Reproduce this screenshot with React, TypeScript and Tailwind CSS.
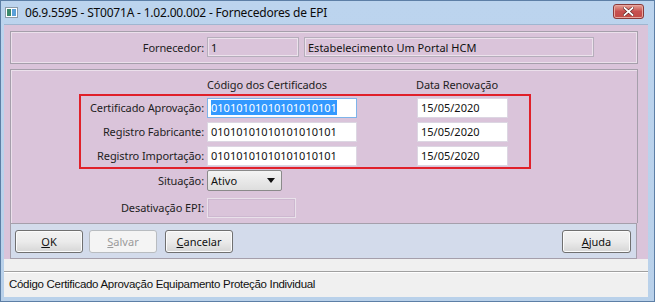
import React from "react";

const label = "text-[11px] text-[#1e1e1e] leading-none whitespace-nowrap tracking-[-0.1px]";
const ff = { fontFamily: '"Noto Sans", "Open Sans", sans-serif' } as React.CSSProperties;

function Field({ w, children, selected = false, disabled = false }: { w: string; children?: React.ReactNode; selected?: boolean; disabled?: boolean }) {
  return (
    <div
      className={`${w} h-[20px] flex items-center pl-[3px] text-[11px] leading-none text-[#111] border ${
        selected ? "border-[#7eb4ea] bg-white" : disabled ? "border-[#b5aebb] bg-[#dac4da] shadow-[inset_0_0_0_1px_#ece2ec]" : "border-[#dcd6e2] bg-white"
      }`}
    >
      {selected ? <span className="bg-[#3399ff] text-white h-[15px] flex items-center">{children}</span> : children}
    </div>
  );
}

function Btn({ children, w = "w-[68px]", disabled = false }: { children: React.ReactNode; w?: string; disabled?: boolean }) {
  return (
    <div
      className={`${w} h-[23px] rounded-[3px] border flex items-center justify-center text-[11px] leading-none ${
        disabled
          ? "border-[#b8bcc0] bg-[#f4f4f4] text-[#9a9a9a]"
          : "border-[#707070] bg-gradient-to-b from-[#f2f2f2] via-[#ebebeb] to-[#d6d6d6] text-[#111] shadow-[inset_0_0_0_1px_#fbfbfb]"
      }`}
    >
      {children}
    </div>
  );
}

export default function App() {
  return (
    <div className="w-[655px] h-[302px] overflow-hidden bg-white" style={ff}>
      <div className="w-[655px] h-[302px] flex flex-col bg-gradient-to-b from-[#bcd4ee] to-[#b9d1ea] border border-[#5d7fa6]">
        {/* title bar */}
        <div className="h-[23px] flex items-center shrink-0">
          <div className="ml-[4px] w-[13px] h-[11px] border border-[#8a9aa8] bg-white flex items-center p-[1px] gap-[1px]">
            <div className="w-[5px] h-[7px] bg-[#3b8a6c]" />
            <div className="w-[4px] h-[7px] bg-[#5aa0d8]" />
          </div>
          <div className="ml-[7px] text-[12px] text-[#0b0b0b] whitespace-nowrap tracking-[-0.2px]">
            06.9.5595 - ST0071A - 1.02.00.002 - Fornecedores de EPI
          </div>
          <div className="ml-auto mr-[10px] mt-[-3px] w-[31px] h-[15px] rounded-[3px] border border-[#8a3a3a] bg-gradient-to-b from-[#e4a296] via-[#c75050] to-[#c24a45] flex items-center justify-center shadow-[inset_0_0_0_1px_#e8a7a0]">
            <svg width="11" height="9" viewBox="0 0 11 9">
              <path d="M1.5 1 L9.5 8 M9.5 1 L1.5 8" stroke="#5a2020" strokeWidth="3" strokeLinecap="square" />
              <path d="M1.5 1 L9.5 8 M9.5 1 L1.5 8" stroke="#ffffff" strokeWidth="1.8" strokeLinecap="square" />
            </svg>
          </div>
        </div>
        {/* client */}
        <div className="flex-1 ml-[3px] mr-[6px] mb-[4px] flex flex-col border-t border-[#9fb6d0]">
          <div className="bg-[#dac4da] h-[234px] pl-[6px] pr-[10px] pt-[6px] flex flex-col">
            {/* panel 1 */}
            <div className="h-[33px] border border-[#a59fab] shadow-[inset_0_0_0_1px_#ebe0eb] flex items-center">
              <div className={`${label} w-[196px] text-right pr-[3px]`}>Fornecedor:</div>
              <Field w="w-[92px]" disabled>1</Field>
              <div className="w-[5px]" />
              <Field w="w-[290px]" disabled>Estabelecimento Um Portal HCM</Field>
            </div>
            {/* panel 2 */}
            <div className="mt-[5px] h-[155px] border border-[#a59fab] border-b-0 shadow-[inset_1px_1px_0_0_#ebe0eb] flex flex-col">
              <div className="flex h-[24px] items-end pb-[4px]">
                <div className={`${label} ml-[196px] w-[209px] text-left`}>Código dos Certificados</div>
                <div className={`${label}`}>Data Renovação</div>
              </div>
              <div className="ml-[68px] w-[452px] h-[75px] border-2 border-[#e0202a] flex flex-col gap-[4px] pt-[2px]">
                {[
                  ["Certificado Aprovação:", true],
                  ["Registro Fabricante:", false],
                  ["Registro Importação:", false],
                ].map(([t, sel], i) => (
                  <div key={i} className="flex items-center h-[20px]">
                    <div className={`${label} w-[126px] text-right pr-[3px]`}>{t as string}</div>
                    <Field w="w-[150px]" selected={sel as boolean}>01010101010101010101</Field>
                    <div className="w-[60px]" />
                    <Field w="w-[91px]">15/05/2020</Field>
                  </div>
                ))}
              </div>
              <div className="flex items-center mt-[1px] h-[22px]">
                <div className={`${label} w-[196px] text-right pr-[3px]`}>Situação:</div>
                <div className="w-[75px] h-[21px] rounded-[2px] border border-[#8a8a8a] bg-gradient-to-b from-[#f4f4f4] to-[#dedede] flex items-center pl-[3px] text-[11px] leading-none text-[#111]">
                  <span>Ativo</span>
                  <svg className="ml-auto mr-[6px]" width="8" height="5" viewBox="0 0 8 5">
                    <path d="M0 0 H8 L4 5 Z" fill="#111" />
                  </svg>
                </div>
              </div>
              <div className="flex items-center mt-[6px] h-[20px]">
                <div className={`${label} w-[196px] text-right pr-[3px]`}>Desativação EPI:</div>
                <div className="w-[89px] h-[20px] border border-[#e9e1ea] bg-[#dac4da] shadow-[inset_0_0_0_1px_#cdb8d0]" />
              </div>
            </div>
            {/* button bar */}
            <div className="h-[36px] mr-[1px] bg-[#d3dbeb] border border-[#a59fab] flex items-center pl-[4px] pr-[5px]">
              <Btn>
                <span><u>O</u>K</span>
              </Btn>
              <div className="w-[6px]" />
              <Btn disabled>
                <span><u>S</u>alvar</span>
              </Btn>
              <div className="w-[8px]" />
              <Btn>
                <span><u>C</u>ancelar</span>
              </Btn>
              <div className="ml-auto">
                <Btn w="w-[69px]">
                  <span><u>A</u>juda</span>
                </Btn>
              </div>
            </div>
          </div>
          <div className="flex-1 bg-[#f0f0f0] flex flex-col">
            <div className="h-[12px]" />
            <div className="flex-1 border-t border-[#a0a0a0] shadow-[inset_0_1px_0_0_#ffffff] flex items-center pl-[5px] text-[11.5px] text-[#111] tracking-[-0.3px]" style={{ fontFamily: '"Liberation Sans", Arial, sans-serif' }}>
              Código Certificado Aprovação Equipamento Proteção Individual
            </div>
          </div>
        </div>
      </div>
    </div>
  );
}
